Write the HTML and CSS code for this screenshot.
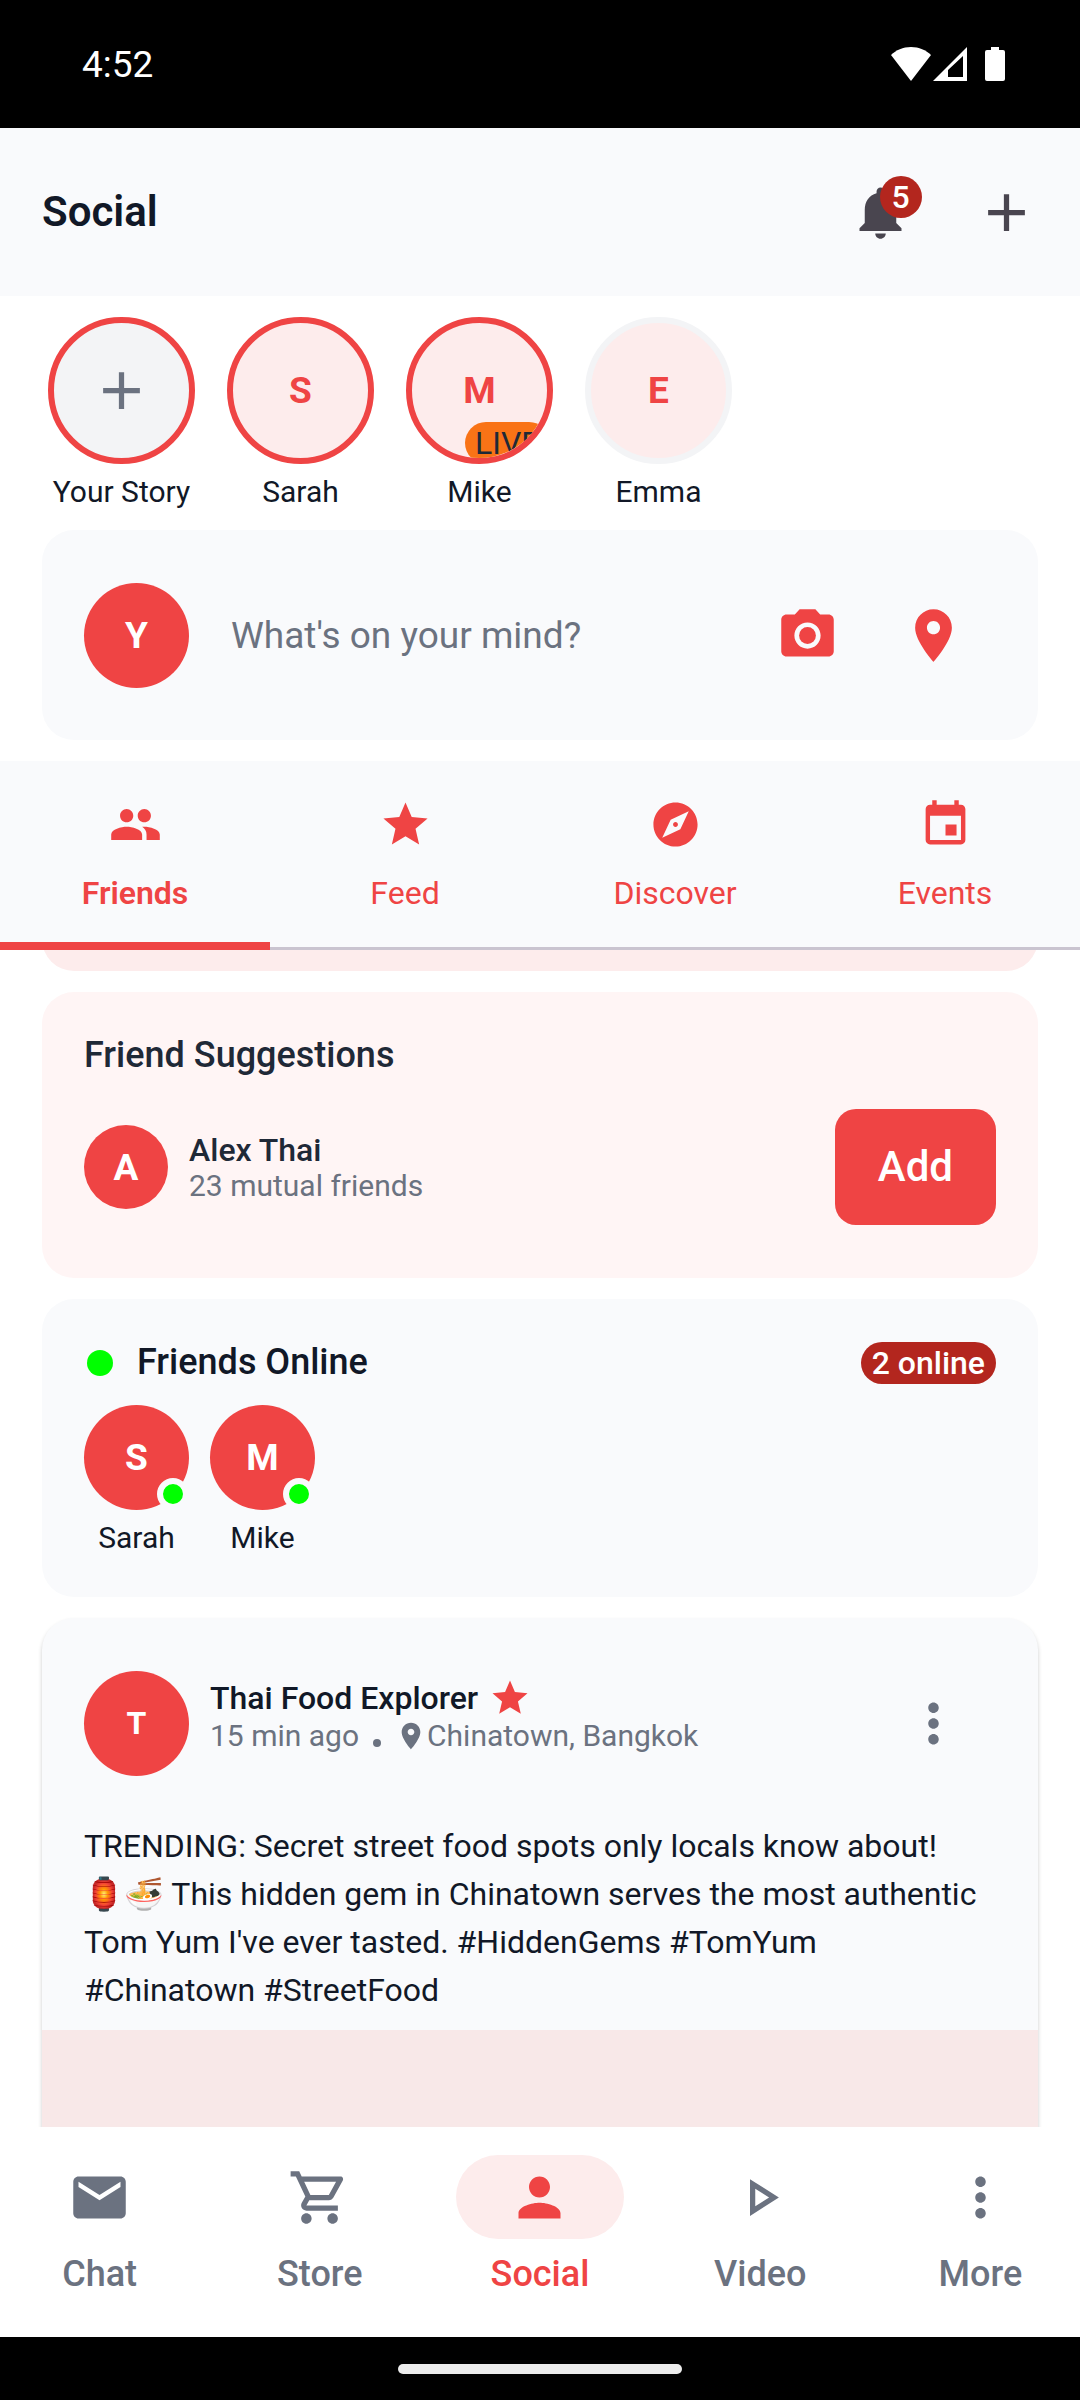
FILE: index.html
```html
<!DOCTYPE html>
<html lang="en">
<head>
<meta charset="utf-8">
<meta name="viewport" content="width=device-width, initial-scale=1">
<title>Social</title>
<link rel="stylesheet" href="styles.css">
</head>
<body>
<div class="status-bar">
  <time class="clock">4:52</time>
  <div class="status-icons">
    <svg class="icon-wifi" viewBox="0 0 40 34" aria-hidden="true"><path d="M20 0C12 0 5 3 0 8l20 26L40 8C35 3 28 0 20 0z"/></svg>
    <svg class="icon-signal" viewBox="0 0 34 34" aria-hidden="true"><path fill-rule="evenodd" d="M34 0v34H0zM30 9L15 23v7h15z"/></svg>
    <svg class="icon-battery" viewBox="0 0 20 34" aria-hidden="true"><path d="M6 0h8v3h4q2 0 2 2v27q0 2-2 2H2q-2 0-2-2V5q0-2 2-2h4z"/></svg>
  </div>
</div>

<header class="app-bar">
  <h1 class="app-title">Social</h1>
  <div class="app-actions">
    <button class="icon-button" type="button" aria-label="Notifications, 5 new">
      <span class="badge-anchor">
        <svg class="icon" viewBox="0 0 24 24"><path d="M12 22c1.1 0 2-.9 2-2h-4c0 1.1.89 2 2 2zm6-6v-5c0-3.07-1.64-5.64-4.5-6.32V4c0-.83-.67-1.5-1.5-1.5s-1.5.67-1.5 1.5v.68C7.63 5.36 6 7.92 6 11v5l-2 2v1h16v-1l-2-2z"/></svg>
        <span class="count-badge">5</span>
      </span>
    </button>
    <button class="icon-button" type="button" aria-label="Create">
      <svg class="icon" viewBox="0 0 24 24"><path d="M19 13h-6v6h-2v-6H5v-2h6V5h2v6h6v2z"/></svg>
    </button>
  </div>
</header>

<section class="stories" aria-label="Stories">
  <button class="story" type="button">
    <span class="ring ring-own"><svg class="icon" viewBox="0 0 24 24"><path d="M19 13h-6v6h-2v-6H5v-2h6V5h2v6h6v2z"/></svg></span>
    <span class="caption">Your Story</span>
  </button>
  <button class="story" type="button">
    <span class="ring">S</span>
    <span class="caption">Sarah</span>
  </button>
  <button class="story" type="button">
    <span class="ring">M<span class="live-chip">LIVE</span></span>
    <span class="caption">Mike</span>
  </button>
  <button class="story" type="button">
    <span class="ring ring-seen">E</span>
    <span class="caption">Emma</span>
  </button>
</section>

<section class="card composer" aria-label="New post">
  <span class="avatar">Y</span>
  <input class="composer-input" type="text" placeholder="What's on your mind?" aria-label="What's on your mind?">
  <div class="composer-actions">
    <button class="icon-button" type="button" aria-label="Add photo">
      <svg class="icon" viewBox="0 0 24 24"><circle cx="12" cy="12" r="3.2"/><path d="M9 2L7.17 4H4c-1.1 0-2 .9-2 2v12c0 1.1.9 2 2 2h16c1.1 0 2-.9 2-2V6c0-1.1-.9-2-2-2h-3.17L15 2H9zm3 15c-2.76 0-5-2.24-5-5s2.24-5 5-5 5 2.24 5 5-2.24 5-5 5z"/></svg>
    </button>
    <button class="icon-button" type="button" aria-label="Add location">
      <svg class="icon" viewBox="0 0 24 24"><path d="M12 2C8.13 2 5 5.13 5 9c0 5.25 7 13 7 13s7-7.75 7-13c0-3.87-3.13-7-7-7zm0 9.5c-1.38 0-2.5-1.12-2.5-2.5s1.12-2.5 2.5-2.5 2.5 1.12 2.5 2.5-1.12 2.5-2.5 2.5z"/></svg>
    </button>
  </div>
</section>

<div class="tabs" role="tablist">
  <button class="tab tab-active" type="button" role="tab" aria-selected="true">
    <svg class="tab-icon" viewBox="0 0 24 24"><path d="M16 11c1.66 0 2.99-1.34 2.99-3S17.66 5 16 5s-3 1.34-3 3 1.34 3 3 3zm-8 0c1.66 0 2.99-1.34 2.99-3S9.66 5 8 5 5 6.34 5 8s1.34 3 3 3zm0 2c-2.33 0-7 1.17-7 3.5V19h14v-2.500c0-2.330-4.670-3.500-7-3.500zm8 0c-.29 0-.62.02-.97.05 1.16.84 1.97 1.970 1.970 3.450V19h6v-2.500c0-2.330-4.670-3.500-7-3.500z"/></svg>
    <span>Friends</span>
  </button>
  <button class="tab" type="button" role="tab" aria-selected="false">
    <svg class="tab-icon" viewBox="0 0 24 24"><path d="M12 17.27L18.18 21l-1.640-7.030L22 9.240l-7.190-.610L12 2 9.190 8.630 2 9.240l5.460 4.730L5.820 21z"/></svg>
    <span>Feed</span>
  </button>
  <button class="tab" type="button" role="tab" aria-selected="false">
    <svg class="tab-icon" viewBox="0 0 24 24"><path d="M12 10.900c-.61 0-1.100.49-1.100 1.100s.49 1.100 1.100 1.100c.61 0 1.100-.49 1.100-1.100s-.49-1.100-1.100-1.100zM12 2C6.480 2 2 6.480 2 12s4.480 10 10 10 10-4.480 10-10S17.520 2 12 2zm2.190 12.190L6 18l3.810-8.190L18 6l-3.810 8.190z"/></svg>
    <span>Discover</span>
  </button>
  <button class="tab" type="button" role="tab" aria-selected="false">
    <svg class="tab-icon" viewBox="0 0 24 24"><path d="M17 12h-5v5h5v-5zM16 1v2H8V1H6v2H5c-1.110 0-1.990.9-1.990 2L3 19c0 1.100.89 2 2 2h14c1.100 0 2-.9 2-2V5c0-1.100-.9-2-2-2h-1V1h-2zm3 18H5V8h14v11z"/></svg>
    <span>Events</span>
  </button>
</div>

<main class="feed">
  <div class="card scrolled-card"></div>

  <section class="card suggestions">
    <h2 class="card-title">Friend Suggestions</h2>
    <div class="suggestion">
      <span class="avatar avatar-small">A</span>
      <div class="person">
        <div class="person-name">Alex Thai</div>
        <div class="meta">23 mutual friends</div>
      </div>
      <button class="add-button" type="button">Add</button>
    </div>
  </section>

  <section class="card online">
    <div class="online-head">
      <span class="online-dot"></span>
      <h2 class="card-title">Friends Online</h2>
      <span class="count-badge online-count">2 online</span>
    </div>
    <ul class="online-list">
      <li class="online-friend">
        <span class="avatar">S<span class="presence"></span></span>
        <span class="caption">Sarah</span>
      </li>
      <li class="online-friend">
        <span class="avatar">M<span class="presence"></span></span>
        <span class="caption">Mike</span>
      </li>
    </ul>
  </section>

  <article class="card post">
    <header class="post-head">
      <span class="avatar avatar-post">T</span>
      <div class="person post-person">
        <div class="author">Thai Food Explorer
          <svg class="star" viewBox="0 0 24 24" aria-hidden="true"><path d="M12 17.270L18.180 21l-1.640-7.030L22 9.240l-7.190-.610L12 2 9.190 8.630 2 9.240l5.460 4.730L5.820 21z"/></svg>
        </div>
        <div class="meta post-meta">
          <span>15 min ago</span>
          <span class="separator"></span>
          <span class="place"><svg class="pin" viewBox="0 0 24 24" aria-hidden="true"><path d="M12 2C8.130 2 5 5.130 5 9c0 5.250 7 13 7 13s7-7.750 7-13c0-3.870-3.130-7-7-7zm0 9.500c-1.380 0-2.500-1.120-2.500-2.500s1.120-2.500 2.500-2.500 2.500 1.120 2.500 2.500-1.120 2.500-2.500 2.500z"/></svg>Chinatown, Bangkok</span>
        </div>
      </div>
      <button class="icon-button more" type="button" aria-label="Post options">
        <svg class="icon" viewBox="0 0 24 24"><path d="M12 8c1.100 0 2-.9 2-2s-.9-2-2-2-2 .9-2 2 .9 2 2 2zm0 2c-1.100 0-2 .9-2 2s.9 2 2 2 2-.9 2-2-.9-2-2-2zm0 6c-1.100 0-2 .9-2 2s.9 2 2 2 2-.9 2-2-.9-2-2-2z"/></svg>
      </button>
    </header>
    <p class="post-text">TRENDING: Secret street food spots only locals know about!<br>🏮🍜 This hidden gem in Chinatown serves the most authentic Tom Yum I've ever tasted. #HiddenGems #TomYum<br>#Chinatown #StreetFood</p>
    <div class="post-media"></div>
  </article>
</main>

<nav class="bottom-nav">
  <a class="nav-item" href="#chat">
    <span class="nav-pill"><svg class="icon" viewBox="0 0 24 24"><path d="M20 4H4c-1.100 0-1.990.9-1.990 2L2 18c0 1.100.9 2 2 2h16c1.100 0 2-.9 2-2V6c0-1.100-.9-2-2-2zm0 4l-8 5-8-5V6l8 5 8-5v2z"/></svg></span>
    <span>Chat</span>
  </a>
  <a class="nav-item" href="#store">
    <span class="nav-pill"><svg class="icon" viewBox="0 0 24 24"><path d="M15.550 13c.75 0 1.410-.41 1.750-1.030l3.580-6.490c.37-.66-.11-1.480-.87-1.480H5.210l-.94-2H1v2h2l3.600 7.590-1.350 2.440C4.520 15.370 5.480 17 7 17h12v-2H7l1.100-2h7.450zM6.160 6h12.150l-2.760 5H8.530L6.160 6zM7 18c-1.100 0-1.990.9-1.990 2S5.900 22 7 22s2-.9 2-2-.9-2-2-2zm10 0c-1.100 0-1.990.9-1.990 2s.89 2 1.990 2 2-.9 2-2-.9-2-2-2z"/></svg></span>
    <span>Store</span>
  </a>
  <a class="nav-item nav-active" href="#social" aria-current="page">
    <span class="nav-pill"><svg class="icon" viewBox="0 0 24 24"><path d="M12 12c2.210 0 4-1.790 4-4s-1.790-4-4-4-4 1.790-4 4 1.790 4 4 4zm0 2c-2.670 0-8 1.340-8 4v2h16v-2c0-2.660-5.330-4-8-4z"/></svg></span>
    <span>Social</span>
  </a>
  <a class="nav-item" href="#video">
    <span class="nav-pill"><svg class="icon" viewBox="0 0 24 24"><path d="M10 8.640L15.270 12 10 15.360V8.640M8 5v14l11-7L8 5z"/></svg></span>
    <span>Video</span>
  </a>
  <a class="nav-item" href="#more">
    <span class="nav-pill"><svg class="icon" viewBox="0 0 24 24"><path d="M12 8c1.100 0 2-.9 2-2s-.9-2-2-2-2 .9-2 2 .9 2 2 2zm0 2c-1.100 0-2 .9-2 2s.9 2 2 2 2-.9 2-2-.9-2-2-2zm0 6c-1.100 0-2 .9-2 2s.9 2 2 2 2-.9 2-2-.9-2-2-2z"/></svg></span>
    <span>More</span>
  </a>
</nav>

<div class="gesture-bar"><span class="gesture-handle"></span></div>
</body>
</html>
```
FILE: styles.css
```css
:root {
  --red: #ef4444;
  --red-tint: #fdecec;
  --badge: #b3261e;
  --ink: #111827;
  --ink-soft: #1f2937;
  --muted: #6b7280;
  --surface: #f9fafc;
  --green: #00ff00;
}

* { box-sizing: border-box; }

body {
  margin: 0;
  height: 100vh;
  display: flex;
  flex-direction: column;
  overflow: hidden;
  background: #fff;
  color: var(--ink);
  font-family: Roboto, "Liberation Sans", sans-serif;
  font-size: 32px;
}

h1, h2, p, ul { margin: 0; padding: 0; }
ul { list-style: none; }

button, input {
  margin: 0;
  padding: 0;
  border: 0;
  background: none;
  color: inherit;
  font: inherit;
}

svg { display: block; fill: currentColor; }

.icon { width: 63px; height: 63px; }

.icon-button {
  display: grid;
  place-items: center;
  width: 126px;
  height: 126px;
}

/* System status bar */
.status-bar {
  flex: none;
  display: flex;
  align-items: center;
  justify-content: space-between;
  height: 128px;
  padding: 0 75px 0 82px;
  background: #000;
  color: #fff;
}
.clock { font-size: 37px; }
.status-icons { display: flex; align-items: center; }
.icon-wifi { width: 40px; height: 34px; }
.icon-signal { width: 34px; height: 34px; margin: 0 18px 0 2px; }
.icon-battery { width: 20px; height: 34px; }

/* App bar */
.app-bar {
  flex: none;
  display: flex;
  align-items: center;
  justify-content: space-between;
  height: 168px;
  padding: 0 11px 0 42px;
  background: var(--surface);
}
.app-title { font-size: 42px; line-height: 56px; font-weight: 600; }
.app-actions { display: flex; color: #49454f; }
.badge-anchor { position: relative; }
.count-badge {
  display: grid;
  place-items: center;
  min-width: 42px;
  height: 42px;
  border-radius: 21px;
  background: var(--badge);
  color: #fff;
  font-size: 32px;
  line-height: 42px;
  font-weight: 500;
}
.badge-anchor .count-badge { position: absolute; left: 31px; top: -5px; }

/* Stories */
.stories {
  flex: none;
  display: flex;
  gap: 32px;
  padding: 21px 48px 20px;
}
.story {
  display: flex;
  flex-direction: column;
  align-items: center;
  gap: 10px;
  width: 147px;
}
.ring {
  position: relative;
  display: grid;
  place-items: center;
  width: 147px;
  height: 147px;
  border: 6px solid var(--red);
  border-radius: 50%;
  overflow: hidden;
  background: var(--red-tint);
  color: var(--red);
  font-size: 37px;
  font-weight: 700;
}
.ring-own { background: #f3f4f6; color: var(--muted); }
.ring-seen { border-color: #f3f4f6; }
.caption { font-size: 30px; line-height: 36px; white-space: nowrap; }
.live-chip {
  position: absolute;
  left: 53px;
  bottom: -6px;
  padding: 0 10px;
  border-radius: 21px;
  background: #f97316;
  color: var(--ink-soft);
  font-size: 32px;
  line-height: 42px;
  font-weight: 400;
}

/* Cards */
.card {
  flex: none;
  margin: 0 42px;
  border-radius: 32px;
  background: var(--surface);
}
.card-title { font-size: 36px; line-height: 53px; font-weight: 500; }

.avatar {
  flex: none;
  position: relative;
  display: grid;
  place-items: center;
  width: 105px;
  height: 105px;
  border-radius: 50%;
  background: var(--red);
  color: #fff;
  font-size: 37px;
  font-weight: 700;
}
.avatar-small { width: 84px; height: 84px; }
.avatar-post { font-size: 32px; }

.composer {
  display: flex;
  align-items: center;
  gap: 42px;
  padding: 42px;
}
.composer-input {
  flex: 1;
  min-width: 0;
  height: 56px;
  font-size: 37px;
}
.composer-input::placeholder { color: var(--muted); opacity: 1; }
.composer-actions { display: flex; color: var(--red); }

/* Tabs */
.tabs {
  flex: none;
  display: grid;
  grid-template-columns: repeat(4, 1fr);
  margin-top: 21px;
  background: var(--surface);
}
.tab {
  display: flex;
  flex-direction: column;
  align-items: center;
  gap: 21px;
  padding: 37px 0 33px;
  border-bottom: 3px solid #cac4d0;
  color: var(--red);
  font-size: 32px;
  line-height: 42px;
}
.tab-icon { width: 53px; height: 53px; }
.tab-active {
  padding-bottom: 28px;
  border-bottom: 8px solid var(--red);
  font-weight: 600;
}

/* Feed */
.feed {
  flex: 1;
  min-height: 0;
  display: flex;
  flex-direction: column;
  gap: 21px;
  overflow: hidden;
}
.scrolled-card { height: 84px; margin-top: -63px; background: var(--red-tint); }

.person { flex: 1; min-width: 0; }
.person-name { line-height: 38px; font-weight: 500; }
.meta { color: var(--muted); font-size: 30px; line-height: 34px; }

.suggestions {
  padding: 37px 42px 53px;
  background: #fff5f5;
  color: var(--ink-soft);
}
.suggestion {
  display: flex;
  align-items: center;
  gap: 21px;
  margin-top: 27px;
}
.add-button {
  padding: 30px 43px;
  border-radius: 21px;
  background: var(--red);
  color: #fff;
  font-size: 42px;
  line-height: 56px;
  font-weight: 500;
}

.online { padding: 37px 42px 41px; }
.online-head { display: flex; align-items: center; gap: 21px; }
.online-dot {
  width: 26px;
  height: 26px;
  margin: 0 3px;
  border-radius: 50%;
  background: var(--green);
}
.online-count { margin-left: auto; padding: 0 11px; }
.online-list { display: flex; gap: 21px; margin-top: 16px; }
.online-friend {
  display: flex;
  flex-direction: column;
  align-items: center;
  gap: 10px;
  width: 105px;
}
.presence {
  position: absolute;
  right: 0;
  bottom: 0;
  width: 32px;
  height: 32px;
  border: 6px solid var(--surface);
  border-radius: 50%;
  background: var(--green);
}

.post {
  padding-top: 42px;
  box-shadow: 0 3px 4px rgba(0, 0, 0, 0.2);
  overflow: hidden;
}
.post-head {
  display: flex;
  align-items: center;
  gap: 21px;
  padding: 0 42px;
}
.post-person { padding-bottom: 17px; }
.author {
  display: flex;
  align-items: center;
  gap: 11px;
  line-height: 42px;
  font-weight: 500;
}
.star { width: 42px; height: 42px; color: var(--red); }
.post-meta { display: flex; align-items: center; }
.separator {
  width: 8px;
  height: 8px;
  margin: 14px 14px 0;
  border-radius: 50%;
  background: currentColor;
}
.place { display: flex; align-items: center; }
.pin { width: 32px; height: 32px; }
.more { color: var(--muted); }
.post-text {
  padding: 36px 42px 16px;
  line-height: 48px;
}
.post-media { height: 525px; background: #f8e8e8; }

/* Bottom navigation */
.bottom-nav {
  flex: none;
  display: grid;
  grid-template-columns: repeat(5, 1fr);
  gap: 21px;
  padding: 28px 0 37px;
  background: #fff;
}
.nav-item {
  display: flex;
  flex-direction: column;
  align-items: center;
  gap: 9px;
  color: var(--muted);
  font-size: 36px;
  line-height: 52px;
  font-weight: 500;
  text-decoration: none;
}
.nav-pill {
  display: grid;
  place-items: center;
  width: 168px;
  height: 84px;
  border-radius: 42px;
}
.nav-active { color: var(--red); }
.nav-active .nav-pill { background: var(--red-tint); }

.gesture-bar {
  flex: none;
  display: grid;
  place-items: center;
  height: 63px;
  background: #000;
}
.gesture-handle {
  width: 284px;
  height: 10px;
  border-radius: 5px;
  background: #ececec;
}
```
